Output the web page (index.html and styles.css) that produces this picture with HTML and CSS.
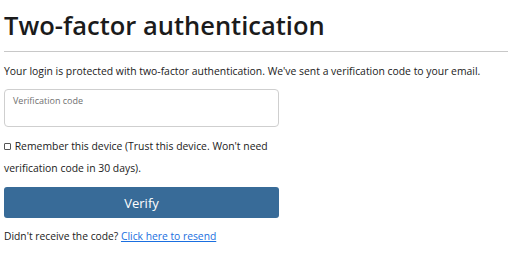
FILE: index.html
```html
<!DOCTYPE html>
<html>
<head>
<meta charset="utf-8">
<link rel="stylesheet" href="styles.css">
</head>
<body>
<div class="page">
  <h1 class="title">Two-factor authentication</h1>
  <hr class="rule">
  <p class="intro">Your login is protected with two-factor authentication. We've sent a verification code to your email.</p>
  <form class="form">
    <div class="field">
      <label class="field-label">Verification code</label>
    </div>
    <label class="remember"><input type="checkbox" class="check"> Remember this device (Trust this device. Won't need verification code in 30 days).</label>
    <button type="button" class="btn">Verify</button>
  </form>
  <p class="resend">Didn't receive the code? <a href="#" class="link">Click here to resend</a></p>
</div>
</body>
</html>
```
FILE: styles.css
```css
html, body {
  margin: 0;
  padding: 0;
  background: #fff;
}
body {
  font-family: "Open Sans", "DejaVu Sans", sans-serif;
  color: #212121;
}
.page {
  padding: 0 0 0 4px;
}
.title {
  margin: 0;
  padding-top: 8px;
  font-size: 25.5px;
  line-height: 34px;
  font-weight: 600;
  color: #1b1b1b;
}
.rule {
  margin: 9px 0 0 0;
  border: 0;
  border-top: 1px solid #c8c8c8;
  height: 0;
}
.intro {
  margin: 11px 0 0 0;
  font-size: 10.4px;
  line-height: 16px;
}
.form {
  width: 275px;
  display: flex;
  flex-direction: column;
}
.field {
  margin-top: 10px;
  height: 38px;
  box-sizing: border-box;
  border: 1px solid #cfcfcf;
  border-radius: 4px;
  padding: 5px 8px;
}
.field-label {
  font-size: 9px;
  line-height: 12px;
  color: #707070;
  display: block;
}
.remember {
  margin-top: 8px;
  font-size: 10.4px;
  line-height: 22px;
}
.check {
  appearance: none;
  -webkit-appearance: none;
  width: 7px;
  height: 7px;
  border: 1px solid #555;
  border-radius: 1px;
  margin: 0 1px 0 0;
  vertical-align: 0;
}
.btn {
  margin-top: 8px;
  height: 31px;
  border: 0;
  border-radius: 3px;
  background: #386b98;
  color: #fff;
  font-family: inherit;
  font-size: 13px;
}
.resend {
  margin: 10px 0 0 0;
  font-size: 10.3px;
  line-height: 16px;
}
.link {
  color: #1a6fe0;
  text-decoration: underline;
}
```
